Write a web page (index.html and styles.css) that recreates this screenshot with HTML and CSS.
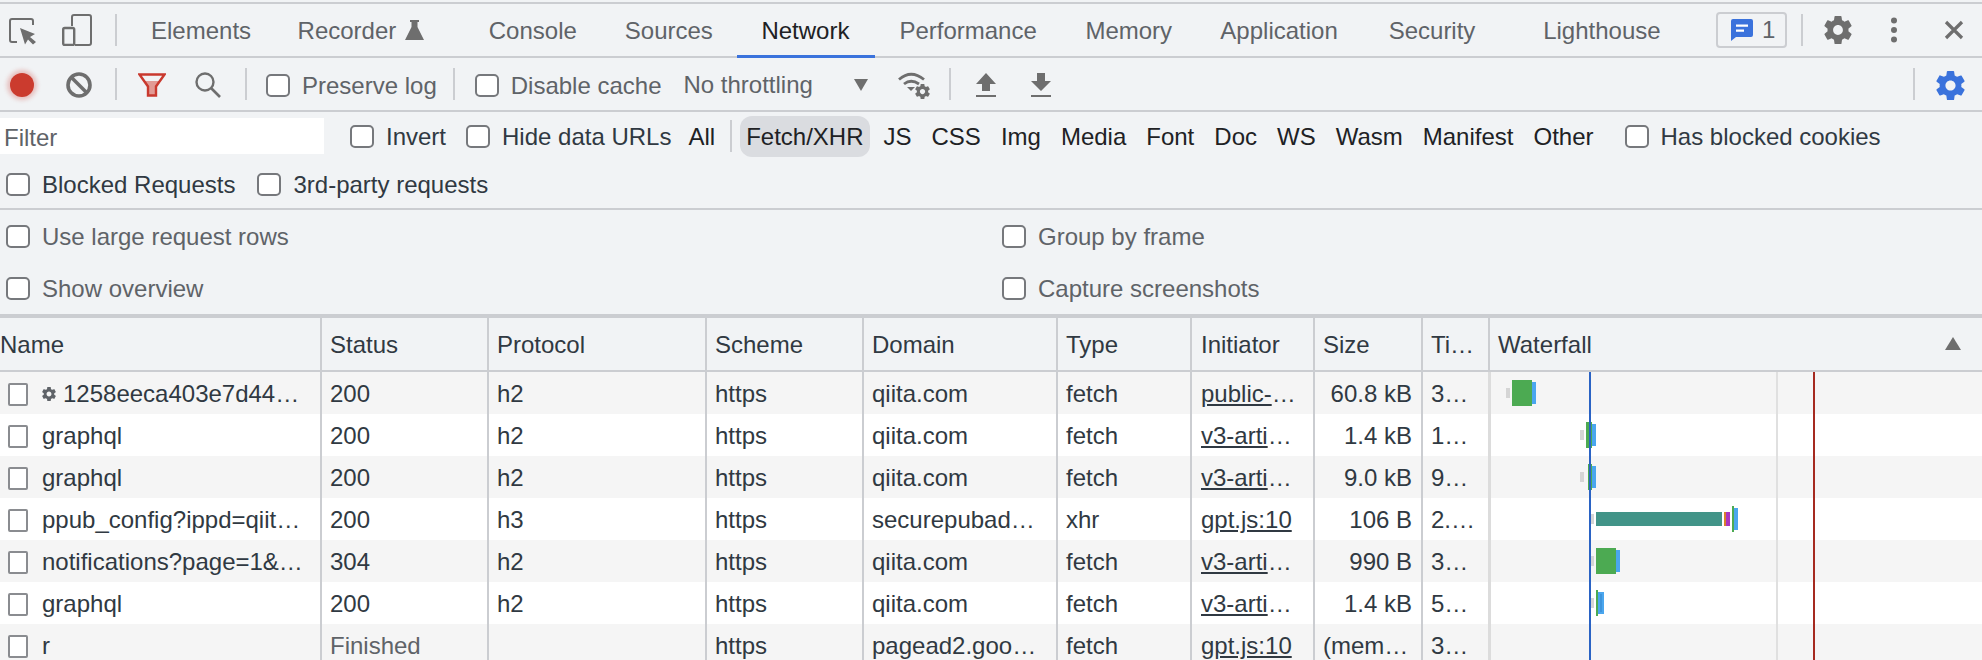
FILE: index.html
```html
<!DOCTYPE html>
<html lang="en">
<head>
<meta charset="utf-8">
<title>DevTools Network</title>
<link rel="stylesheet" href="styles.css">
</head>
<body>
<svg class="defs" width="0" height="0" aria-hidden="true">
  <symbol id="gear" viewBox="2 2 20 20"><path fill-rule="evenodd" d="M19.43 12.98c.04-.32.07-.64.07-.98s-.03-.66-.07-.98l2.11-1.65c.19-.15.24-.42.12-.64l-2-3.46c-.12-.22-.39-.3-.61-.22l-2.49 1c-.52-.4-1.08-.73-1.69-.98l-.38-2.65C14.46 2.18 14.25 2 14 2h-4c-.25 0-.46.18-.49.42l-.38 2.65c-.61.25-1.17.59-1.69.98l-2.49-1c-.23-.09-.49 0-.61.22l-2 3.46c-.13.22-.07.49.12.64l2.11 1.65c-.04.32-.07.65-.07.98s.03.66.07.98l-2.11 1.65c-.19.15-.24.42-.12.64l2 3.46c.12.22.39.3.61.22l2.49-1c.52.4 1.08.73 1.69.98l.38 2.65c.03.24.24.42.49.42h4c.25 0 .46-.18.49-.42l.38-2.65c.61-.25 1.17-.59 1.69-.98l2.49 1c.23.09.49 0 .61-.22l2-3.46c.12-.22.07-.49-.12-.64l-2.11-1.65zM12 15.5c-1.93 0-3.5-1.57-3.5-3.5s1.57-3.5 3.5-3.5 3.5 1.57 3.5 3.5-1.57 3.5-3.5 3.5z"/></symbol>
</svg>

<header class="tabbar">
  <svg class="ic-inspect" width="30" height="32" viewBox="0 0 30 32"><path d="M25 11V7a2 2 0 0 0-2-2H4a2 2 0 0 0-2 2v19a2 2 0 0 0 2 2h5" fill="none" stroke="#6e6e6e" stroke-width="2"/><path d="M12 14l15 6-5 3 6 5-3 2.500-5-5-3 5z" fill="#6e6e6e"/></svg>
  <svg class="ic-device" width="30" height="32" viewBox="0 0 30 32"><path d="M10 12V3a2 2 0 0 1 2-2h15a2 2 0 0 1 2 2v26a2 2 0 0 1-2 2H13" fill="none" stroke="#6e6e6e" stroke-width="2"/><rect x="1.200" y="14" width="11" height="17" rx="1.500" fill="none" stroke="#6e6e6e" stroke-width="2.400"/></svg>
  <span class="sep sep-tabs"></span>
  <nav class="tabs">
    <a class="tab tab-el">Elements</a>
    <a class="tab tab-recorder">Recorder<svg class="ic-flask" width="19" height="20" viewBox="0 0 19 20"><path d="M5 0h9v2h-1.500v5L19 20H0L6.500 7V2H5z" fill="#6e6e6e"/></svg></a>
    <a class="tab">Console</a>
    <a class="tab tab-src">Sources</a>
    <a class="tab tab-active">Network</a>
    <a class="tab tab-perf">Performance</a>
    <a class="tab tab-mem">Memory</a>
    <a class="tab tab-app">Application</a>
    <a class="tab tab-sec">Security</a>
    <a class="tab tab-light">Lighthouse</a>
  </nav>
  <div class="tab-end">
    <span class="issues">
      <svg width="22" height="22" viewBox="0 0 22 22"><path d="M2 0h18a2 2 0 0 1 2 2v14a2 2 0 0 1-2 2H5l-5 4V2a2 2 0 0 1 2-2z" fill="#3a72dc"/><path d="M5 5.500h12v2.200H5zM5 10.500h8v2.200H5z" fill="#fff"/></svg>
      <span>1</span>
    </span>
    <span class="sep sep-issues"></span>
    <svg class="ic-gear" width="28" height="28"><use href="#gear"/></svg>
    <svg class="ic-dots" width="8" height="26" viewBox="0 0 8 26"><circle cx="4" cy="3.500" r="3"/><circle cx="4" cy="13" r="3"/><circle cx="4" cy="22.500" r="3"/></svg>
    <svg class="ic-close" width="20" height="20" viewBox="0 0 20 20"><path d="M2 2l16 16M18 2L2 18" stroke="#6e6e6e" stroke-width="3.200" fill="none"/></svg>
  </div>
</header>

<section class="toolbar">
  <span class="record"></span>
  <svg class="ic-block" width="26" height="26" viewBox="0 0 26 26"><circle cx="13" cy="13" r="11" fill="none" stroke="#6e6e6e" stroke-width="3.600"/><path d="M5 5l16 16" stroke="#6e6e6e" stroke-width="3.600"/></svg>
  <span class="sep sep-a"></span>
  <svg class="ic-funnel" width="28" height="24" viewBox="0 0 28 24"><path d="M6 8h16l-4.500 6v8h-7v-8z" fill="#e29a94"/><path d="M1.500 1.500h25L18 13.500v9h-8v-9z" fill="none" stroke="#c9392e" stroke-width="2.400"/></svg>
  <svg class="ic-search" width="26" height="26" viewBox="0 0 26 26"><circle cx="10" cy="10" r="8.500" fill="none" stroke="#6e6e6e" stroke-width="2.400"/><path d="M16 16l9 9" stroke="#6e6e6e" stroke-width="2.600"/></svg>
  <span class="sep sep-b"></span>
  <label class="check check-preserve"><span class="box"></span>Preserve log</label>
  <span class="sep sep-c"></span>
  <label class="check check-disable"><span class="box"></span>Disable cache</label>
  <span class="throttle">No throttling</span>
  <svg class="ic-caret" width="14" height="12" viewBox="0 0 14 12"><path d="M0 0h14L7 12z" fill="#6e6e6e"/></svg>
  <svg class="ic-wifi" width="33" height="28" viewBox="0 0 33 28"><path d="M1 8.500Q13-2 26 8.500M6 13q7-5.500 15 0" fill="none" stroke="#6e6e6e" stroke-width="2.800"/><path d="M9 16h8l-4 4z" fill="#6e6e6e"/><use href="#gear" x="17" y="13" width="15" height="15" fill="#6e6e6e"/></svg>
  <span class="sep sep-d"></span>
  <svg class="ic-up" width="20" height="24" viewBox="0 0 20 24"><path d="M10 0l10 11h-6v7H6v-7H0z" fill="#6e6e6e"/><path d="M0 22h20v2H0z" fill="#6e6e6e"/></svg>
  <svg class="ic-down" width="20" height="24" viewBox="0 0 20 24"><path d="M6 0h8v8h6L10 18 0 8h6z" fill="#6e6e6e"/><path d="M0 22h20v2H0z" fill="#6e6e6e"/></svg>
  <span class="sep sep-e"></span>
  <svg class="ic-gear-blue" width="29" height="29"><use href="#gear"/></svg>
</section>

<section class="filters">
  <div class="filter-row">
    <span class="filter-input">Filter</span>
    <label class="check check-invert"><span class="box"></span>Invert</label>
    <label class="check check-hide"><span class="box"></span>Hide data URLs</label>
    <span class="type type-all">All</span>
    <span class="sep sep-f"></span>
    <div class="types">
      <span class="type type-on">Fetch/XHR</span>
      <span class="type">JS</span>
      <span class="type">CSS</span>
      <span class="type">Img</span>
      <span class="type">Media</span>
      <span class="type">Font</span>
      <span class="type">Doc</span>
      <span class="type">WS</span>
      <span class="type">Wasm</span>
      <span class="type">Manifest</span>
      <span class="type">Other</span>
    </div>
    <label class="check check-cookies"><span class="box"></span>Has blocked cookies</label>
  </div>
  <div class="filter-row filter-row-2">
    <label class="check"><span class="box"></span>Blocked Requests</label>
    <label class="check check-3rd"><span class="box"></span>3rd-party requests</label>
  </div>
</section>

<section class="settings">
  <label class="check"><span class="box"></span>Use large request rows</label>
  <label class="check"><span class="box"></span>Group by frame</label>
  <label class="check"><span class="box"></span>Show overview</label>
  <label class="check"><span class="box"></span>Capture screenshots</label>
</section>

<section class="grid">
  <div class="row head">
    <div class="cell c-name">Name</div><div class="cell">Status</div><div class="cell">Protocol</div><div class="cell">Scheme</div><div class="cell">Domain</div><div class="cell">Type</div><div class="cell c-init">Initiator</div><div class="cell">Size</div><div class="cell">Ti…</div>
    <div class="cell cell-wf-head">Waterfall<svg class="ic-sort" width="16" height="13" viewBox="0 0 16 13"><path d="M8 0l8 13H0z" fill="#6e6e6e"/></svg></div>
  </div>
  <div class="body">
    <div class="row odd">
      <div class="cell c-name"><span class="file"></span><svg class="ic-mini" width="14" height="14"><use href="#gear"/></svg>1258eeca403e7d44…</div><div class="cell">200</div><div class="cell">h2</div><div class="cell">https</div><div class="cell">qiita.com</div><div class="cell">fetch</div><div class="cell c-init"><span class="link">public-</span>…</div><div class="cell size">60.8 kB</div><div class="cell">3…</div>
      <div class="cell wf"><i class="b b-wait" style="left:15px;width:4px"></i><i class="b b-green" style="left:21px;width:20px"></i><i class="b b-blue" style="left:41px;width:4px"></i></div>
    </div>
    <div class="row">
      <div class="cell c-name"><span class="file"></span>graphql</div><div class="cell">200</div><div class="cell">h2</div><div class="cell">https</div><div class="cell">qiita.com</div><div class="cell">fetch</div><div class="cell c-init"><span class="link">v3-arti</span>…</div><div class="cell size">1.4 kB</div><div class="cell">1…</div>
      <div class="cell wf"><i class="b b-wait" style="left:89px;width:4px"></i><i class="b b-green" style="left:95px;width:6px"></i><i class="b b-blue" style="left:101px;width:4px"></i></div>
    </div>
    <div class="row odd">
      <div class="cell c-name"><span class="file"></span>graphql</div><div class="cell">200</div><div class="cell">h2</div><div class="cell">https</div><div class="cell">qiita.com</div><div class="cell">fetch</div><div class="cell c-init"><span class="link">v3-arti</span>…</div><div class="cell size">9.0 kB</div><div class="cell">9…</div>
      <div class="cell wf"><i class="b b-wait" style="left:89px;width:4px"></i><i class="b b-green" style="left:97px;width:4px"></i><i class="b b-blue" style="left:101px;width:4px"></i></div>
    </div>
    <div class="row">
      <div class="cell c-name"><span class="file"></span>ppub_config?ippd=qiit…</div><div class="cell">200</div><div class="cell">h3</div><div class="cell">https</div><div class="cell">securepubad…</div><div class="cell">xhr</div><div class="cell c-init"><span class="link">gpt.js:10</span></div><div class="cell size">106 B</div><div class="cell">2.…</div>
      <div class="cell wf"><i class="b b-wait" style="left:100px;width:3px"></i><i class="b b-teal" style="left:105px;width:126px"></i><i class="b b-orange" style="left:233px;width:2px"></i><i class="b b-purple" style="left:235px;width:4px"></i><i class="b b-green" style="left:241px;width:2px"></i><i class="b b-blue" style="left:243px;width:4px"></i></div>
    </div>
    <div class="row odd">
      <div class="cell c-name"><span class="file"></span>notifications?page=1&amp;…</div><div class="cell">304</div><div class="cell">h2</div><div class="cell">https</div><div class="cell">qiita.com</div><div class="cell">fetch</div><div class="cell c-init"><span class="link">v3-arti</span>…</div><div class="cell size">990 B</div><div class="cell">3…</div>
      <div class="cell wf"><i class="b b-wait" style="left:100px;width:3px"></i><i class="b b-green" style="left:105px;width:20px"></i><i class="b b-blue" style="left:125px;width:4px"></i></div>
    </div>
    <div class="row">
      <div class="cell c-name"><span class="file"></span>graphql</div><div class="cell">200</div><div class="cell">h2</div><div class="cell">https</div><div class="cell">qiita.com</div><div class="cell">fetch</div><div class="cell c-init"><span class="link">v3-arti</span>…</div><div class="cell size">1.4 kB</div><div class="cell">5…</div>
      <div class="cell wf"><i class="b b-wait" style="left:100px;width:3px"></i><i class="b b-green" style="left:105px;width:2px"></i><i class="b b-blue" style="left:107px;width:6px"></i><i class="b b-blue-dark" style="left:109px;width:2px"></i></div>
    </div>
    <div class="row odd">
      <div class="cell c-name"><span class="file"></span>r</div><div class="cell muted">Finished</div><div class="cell"></div><div class="cell">https</div><div class="cell">pagead2.goo…</div><div class="cell">fetch</div><div class="cell c-init"><span class="link">gpt.js:10</span></div><div class="cell">(mem…</div><div class="cell">3…</div>
      <div class="cell wf"></div>
    </div>
    <span class="vline vline-blue"></span>
    <span class="vline vline-grey"></span>
    <span class="vline vline-red"></span>
  </div>
</section>
</body>
</html>
```

FILE: styles.css
```css
* { box-sizing: border-box; }
html, body { margin: 0; height: 660px; overflow: hidden; }
body {
  background: #f1f3f5;
  color: #303942;
  font: 24px/1 "Liberation Sans", Arial, sans-serif;
  padding-top: 2px;
}
.defs { position: absolute; }
.sep { width: 2px; height: 32px; background: #cbcdd1; flex: none; }
svg { flex: none; display: block; }

/* Tab bar */
.tabbar {
  display: flex;
  align-items: center;
  height: 56px;
  border-top: 2px solid #cbcdd1;
  border-bottom: 2px solid #cbcdd1;
  padding-left: 8px;
}
.ic-device { margin-left: 24px; }
.sep-tabs { margin-left: 23px; }
.tabs { display: flex; align-self: stretch; margin-left: 10px; }
.tab {
  display: flex;
  align-items: center;
  padding: 2px 24px 0;
  color: #5f6368;
  white-space: nowrap;
  position: relative;
}
.tab-el { padding-right: 22.500px; }
.tab-recorder { padding-right: 40.500px; }
.ic-flask { margin: -2px 0 0 9px; }
.tab-src { padding-right: 24.500px; }
.tab-active { color: #202124; padding-right: 26px; }
.tab-active::after {
  content: "";
  position: absolute;
  left: 0;
  right: 0;
  bottom: -2px;
  height: 3px;
  background: #3a72dc;
}
.tab-perf { padding-right: 24.600px; }
.tab-mem { padding-right: 24.300px; }
.tab-app { padding-right: 26.900px; }
.tab-sec { padding-right: 43.800px; }
.tab-end { display: flex; align-items: center; margin-left: auto; padding-right: 18px; }
.issues {
  display: flex;
  align-items: center;
  gap: 9px;
  width: 71px;
  height: 36px;
  padding-left: 13px;
  border: 2px solid #cbcdd1;
  border-radius: 4px;
  color: #5f6368;
}
.sep-issues { margin-left: 14px; }
.ic-gear { margin-left: 21px; fill: #6e6e6e; }
.ic-dots { margin-left: 38px; fill: #6e6e6e; }
.ic-close { margin-left: 46px; }

/* Toolbar */
.toolbar {
  display: flex;
  align-items: center;
  height: 54px;
  padding-top: 2px;
  border-bottom: 2px solid #cbcdd1;
  color: #5f6368;
}
.toolbar .sep { margin-top: -2px; }
.record {
  width: 24px;
  height: 24px;
  margin-left: 10px;
  border-radius: 50%;
  background: #cb3b2e;
  box-shadow: 0 0 4px 3px rgba(203, 59, 46, .28);
}
.ic-block { margin-left: 32px; }
.sep-a { margin-left: 23px; }
.ic-funnel { margin-left: 21px; }
.ic-search { margin-left: 29px; }
.sep-b { margin-left: 24px; }
.check { display: flex; align-items: center; gap: 12px; padding-top: 2px; white-space: nowrap; }
.box {
  width: 24px;
  height: 23px;
  margin-top: -2px;
  flex: none;
  background: #fff;
  border: 2px solid #76787c;
  border-radius: 5px;
}
.check-preserve { margin-left: 19px; }
.sep-c { margin-left: 16px; }
.check-disable { margin-left: 20px; }
.throttle { margin-left: 22px; }
.ic-caret { margin-left: 41px; }
.ic-wifi { margin-left: 30px; }
.sep-d { margin-left: 18px; }
.ic-up { margin-left: 25px; }
.ic-down { margin-left: 35px; }
.sep-e { margin-left: auto; }
.ic-gear-blue { margin: 0 17px 0 21px; fill: #3a72dc; }

/* Filter rows */
.filters { height: 98px; border-bottom: 2px solid #cbcdd1; color: #303942; }
.filter-row { display: flex; align-items: center; height: 48px; }
.filter-row-2 { padding-left: 6px; }
.filter-input {
  display: flex;
  align-items: center;
  width: 324px;
  height: 36px;
  padding: 4px 0 0 4px;
  background: #fff;
  color: #5f6368;
}
.check-invert { margin-left: 26px; }
.check-hide { margin-left: 20px; }
.check-cookies { margin-left: 25px; }
.check-3rd { margin-left: 22px; }
.type { padding: 2px 6px 0; color: #202124; white-space: nowrap; }
.type-all { margin-left: 11px; }
.sep-f { margin-left: 9px; }
.types { display: flex; align-items: center; gap: 8px; margin-left: 8px; }
.type-on {
  display: flex;
  align-items: center;
  height: 41px;
  background: #dadce0;
  border-radius: 12px;
}

/* Settings */
.settings {
  display: grid;
  grid-template-columns: 1002px 1fr;
  grid-auto-rows: 52px;
  height: 108px;
  border-bottom: 4px solid #cbcdd1;
  color: #5f6368;
}
.settings .check { padding-left: 6px; }
.settings .check:nth-child(even) { padding-left: 0; }

/* Network grid */
.row {
  display: grid;
  grid-template-columns: 320px 167px 218px 157px 194px 134px 123px 108px 67px 1fr;
  height: 42px;
  background: #fff;
}
.row.odd { background: #f5f5f5; }
.row.head { height: 54px; background: #f1f3f5; border-bottom: 2px solid #cbcdd1; }
.cell {
  display: flex;
  align-items: center;
  min-width: 0;
  padding: 2px 0 0 8px;
  border-left: 2px solid #cbcdd1;
  white-space: nowrap;
}
.c-name { padding-left: 0; border-left: 0; }
.c-init { padding-left: 9px; }
.file {
  width: 20px;
  height: 23px;
  margin: 0 14px 0 8px;
  flex: none;
  background: #fff;
  border: 2px solid #8a8c90;
  border-radius: 2px;
}
.ic-mini { margin-right: 7px; fill: #5f6368; }
.link { text-decoration: underline; }
.size { justify-content: flex-end; padding-right: 9px; }
.muted { color: #5f6368; }
.cell-wf-head { position: relative; }
.ic-sort { position: absolute; left: 455px; top: 19px; }
.wf { position: relative; padding: 0; border-left: 3px solid #dcdcdc; }
.body { position: relative; }
.b { position: absolute; display: block; }
.b-wait { top: 16px; height: 10px; background: #d5d5d5; }
.b-green { top: 8px; height: 26px; background: #4caa52; }
.b-blue { top: 10px; height: 22px; background: #4aa6ee; }
.b-blue-dark { top: 12px; height: 18px; background: #3d94dc; }
.b-teal { top: 14px; height: 14px; background: #429488; }
.b-orange { top: 14px; height: 14px; background: #d9822b; }
.b-purple { top: 14px; height: 14px; background: #ab36c0; }
.vline { position: absolute; top: 0; bottom: 0; width: 2px; }
.vline-blue { left: 1589px; background: #2a63c4; }
.vline-grey { left: 1776px; background: #e0e0e0; }
.vline-red { left: 1813px; background: #a52a20; }
```
